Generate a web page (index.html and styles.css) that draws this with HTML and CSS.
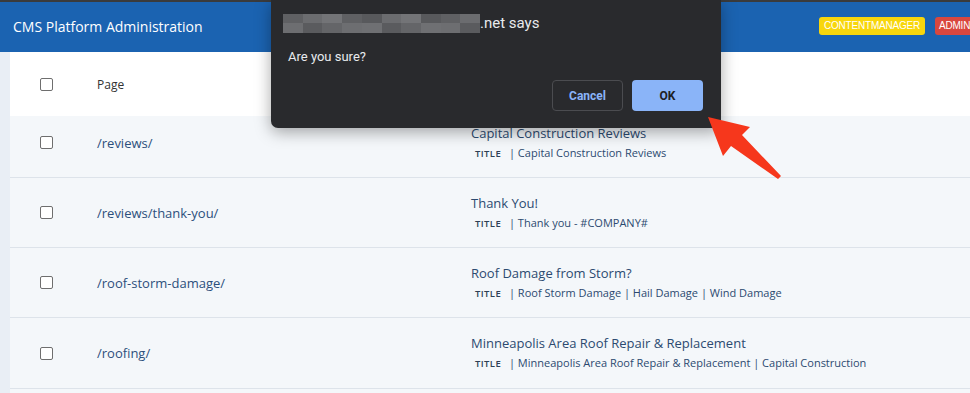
FILE: index.html
```html
<!DOCTYPE html>
<html>
<head>
  <title>Pages</title>
  <link rel="stylesheet" href="styles.css">
</head>
<body>
  <header class="topbar">
    <div class="brand">CMS Platform Administration</div>
    <div class="roles">
      <span class="badge badge-yellow">CONTENTMANAGER</span>
      <span class="badge badge-red">ADMIN</span>
    </div>
  </header>

  <main class="page">
    <div class="table">
      <div class="row head">
        <div class="cell check"><span class="box"></span></div>
        <div class="cell">Page</div>
        <div class="cell"></div>
      </div>
      <div class="row first">
        <div class="cell check"><span class="box"></span></div>
        <div class="cell path">/reviews/</div>
        <div class="cell meta">
          <div class="title">Capital Construction Reviews</div>
          <div class="sub"><span class="tag">TITLE</span> | Capital Construction Reviews</div>
        </div>
      </div>
      <div class="row">
        <div class="cell check"><span class="box"></span></div>
        <div class="cell path">/reviews/thank-you/</div>
        <div class="cell meta">
          <div class="title">Thank You!</div>
          <div class="sub"><span class="tag">TITLE</span> | Thank you - #COMPANY#</div>
        </div>
      </div>
      <div class="row">
        <div class="cell check"><span class="box"></span></div>
        <div class="cell path">/roof-storm-damage/</div>
        <div class="cell meta">
          <div class="title">Roof Damage from Storm?</div>
          <div class="sub"><span class="tag">TITLE</span> | Roof Storm Damage | Hail Damage | Wind Damage</div>
        </div>
      </div>
      <div class="row">
        <div class="cell check"><span class="box"></span></div>
        <div class="cell path">/roofing/</div>
        <div class="cell meta">
          <div class="title">Minneapolis Area Roof Repair &amp; Replacement</div>
          <div class="sub"><span class="tag">TITLE</span> | Minneapolis Area Roof Repair &amp; Replacement | Capital Construction</div>
        </div>
      </div>
    </div>
  </main>

  <div class="dialog">
    <div class="dialog-origin">
      <span class="blur">
        <i class="b1"></i><i class="b2"></i><i class="b3"></i><i class="b1"></i><i class="b4"></i><i class="b2"></i><i class="b3"></i><i class="b4"></i><i class="b1"></i><i class="b2"></i>
      </span>.net says
    </div>
    <div class="dialog-msg">Are you sure?</div>
    <div class="dialog-actions">
      <button class="btn btn-cancel">Cancel</button>
      <button class="btn btn-ok">OK</button>
    </div>
  </div>

  <svg class="arrow" width="90" height="80" viewBox="700 110 90 80">
    <polygon points="708,117 750,127 742,135 781,176 778,179 731,146 723,156" fill="#f6371c"/>
  </svg>
</body>
</html>
```

FILE: styles.css
```css
html, body { height: 100%; }
body { margin: 0; background: #e9eef5; font-family: 'Open Sans', Arial, sans-serif; overflow: hidden; display: flex; flex-direction: column; }

.topbar { flex: none; height: 50px; border-top: 2px solid #3a3b3d; background: #1b63b1; display: flex; align-items: center; padding-left: 13px; overflow: hidden; }
.brand { color: #fff; font-size: 14px; margin-top: -2px; }
.roles { display: flex; gap: 10px; margin-left: auto; margin-right: -23px; margin-top: -2px; }
.badge { font-family: 'Liberation Sans', Arial, sans-serif; font-size: 10px; color: #fff; height: 18px; line-height: 18px; padding: 0 4px; border-radius: 3px; letter-spacing: -0.2px; }
.badge-yellow { background: #f8d60c; width: 98px; text-align: center; }
.badge-red { background: #d9473e; width: 50px; }

.page { flex: 1; padding-left: 10px; display: flex; }
.table { flex: 1; background: #f4f7fa; }
.row { display: grid; grid-template-columns: 87px 374px 1fr; align-items: center; height: 70px; border-bottom: 1px solid #dde3ea; box-sizing: border-box; color: #2b4a70; font-size: 13px; }
.row.head { height: 64px; background: #fff; color: #333; font-size: 12px; border-bottom: none; }
.row.first { height: 62px; padding-bottom: 8px; }
.row:last-child { height: 71px; }
.check { padding-left: 30px; display: flex; align-items: center; }
.box { width: 11px; height: 11px; border: 1px solid #6e6e6e; border-radius: 2px; background: #fff; }
.path { color: #2c4f7c; }
.title { line-height: 18px; color: #2c4a70; }
.sub { font-size: 11px; line-height: 16px; margin-top: 3px; color: #2c4a70; padding-left: 4px; }
.tag { font-size: 9.5px; font-weight: 600; letter-spacing: 0.4px; color: #2e3f55; margin-right: 5px; }

.dialog { position: absolute; left: 271px; top: 0; width: 450px; height: 128px; background: #292a2d; border-radius: 0 0 7px 7px; box-shadow: 0 4px 16px rgba(0,0,0,0.35); box-sizing: border-box; padding: 12px 17px 0 17px; font-family: Roboto, 'Liberation Sans', Arial, sans-serif; color: #e8eaed; }
.dialog-origin { display: flex; align-items: center; font-size: 15px; height: 22px; }
.blur { display: flex; width: 197px; height: 19px; margin-left: -5px; }
.blur i { flex: 1; height: 100%; }
.b1 { background: linear-gradient(#5f6063 50%, #6d6e71 50%); }
.b2 { background: linear-gradient(#6b6c6f 50%, #5a5b5e 50%); }
.b3 { background: linear-gradient(#737477 50%, #646568 50%); }
.b4 { background: linear-gradient(#58595c 50%, #6f7073 50%); }
.dialog-msg { font-size: 13px; margin-top: 15px; }
.dialog-actions { display: flex; justify-content: flex-end; gap: 9px; margin-top: 16px; margin-right: 1px; }
.btn { width: 71px; height: 31px; border-radius: 4px; font-family: Roboto, 'Liberation Sans', Arial, sans-serif; font-size: 12px; font-weight: 700; }
.btn-cancel { background: #292a2d; border: 1px solid #4b4c50; color: #8ab4f8; }
.btn-ok { background: #8ab4f8; border: none; color: #202124; }

.arrow { position: absolute; left: 700px; top: 110px; }
```
